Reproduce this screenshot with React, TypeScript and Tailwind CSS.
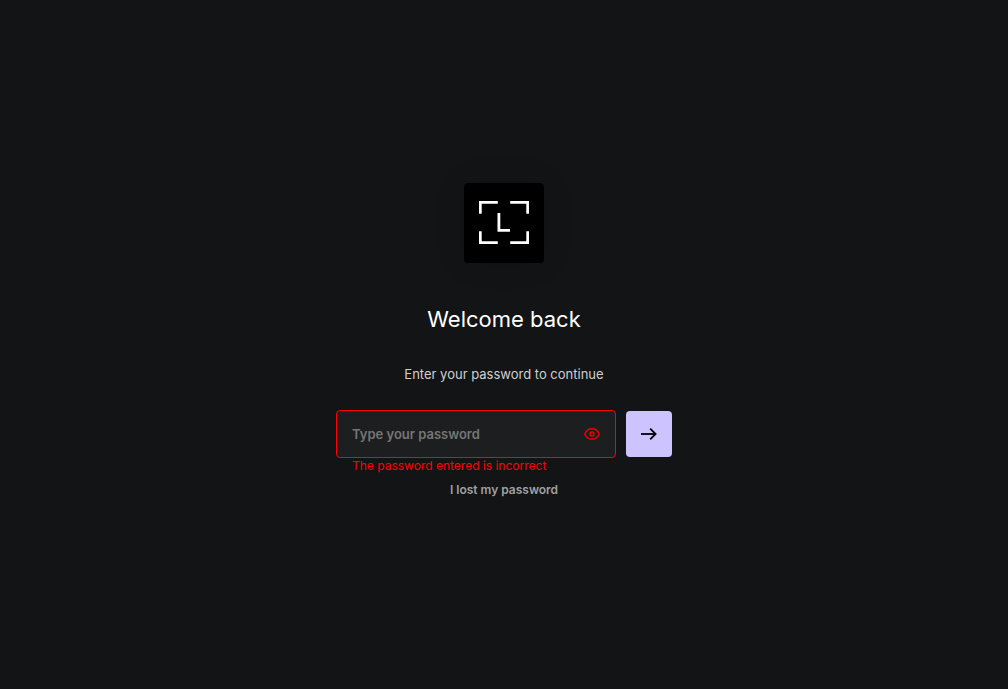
import { useState, type FormEvent } from "react";

function Logo() {
  return (
    <div className="flex size-20 items-center justify-center rounded bg-black shadow-[0_0_30px_rgba(0,0,0,0.12)]">
      <svg width="50" height="43" viewBox="0 0 50 43" fill="#fff" aria-hidden="true">
        <path d="M0 0H18.8V2.7H2.7V12.8H0Z" />
        <path d="M31.2 0H50V12.8H47.3V2.7H31.2Z" />
        <path d="M0 30.2H2.7V40.3H18.8V43H0Z" />
        <path d="M47.3 30.2H50V43H31.2V40.3H47.3Z" />
        <path d="M18.5 12H21.3V28H31V30.7H18.5Z" />
      </svg>
    </div>
  );
}

function EyeIcon() {
  return (
    <svg width="16" height="16" viewBox="0 0 16 16" fill="none" stroke="currentColor" strokeWidth="1.5" aria-hidden="true">
      <path d="M0.8 8C2.2 4.6 4.8 2.8 8 2.8S13.8 4.6 15.2 8C13.8 11.4 11.2 13.2 8 13.2S2.2 11.4 0.8 8Z" strokeLinejoin="round" />
      <circle cx="8" cy="8" r="2" />
    </svg>
  );
}

function ArrowIcon() {
  return (
    <svg width="16" height="16" viewBox="0 0 16 16" fill="none" stroke="currentColor" strokeWidth="1.8" aria-hidden="true">
      <path d="M0 8H14.6" />
      <path d="M9.2 2.6L14.6 8L9.2 13.4" />
    </svg>
  );
}

export default function App() {
  const [password, setPassword] = useState("");
  const [visible, setVisible] = useState(false);

  return (
    <main className="flex min-h-screen flex-col items-center justify-center bg-[#131416] px-4 pb-[9px] font-['Inter',sans-serif] text-white">
      <Logo />
      <h1 className="mt-10 text-[22px] leading-8">Welcome back</h1>
      <p className="mt-[29px] text-[13px] leading-5 text-[#d0d0d0]">Enter your password to continue</p>
      <form
        className="mt-[26px] flex w-full max-w-[336px] items-start gap-2.5"
        onSubmit={(event: FormEvent) => event.preventDefault()}
      >
        <div className="min-w-0 flex-1">
          <div className="flex h-12 items-center rounded border border-[#ff0000] bg-[#1d1e20] px-[15px]">
            <input
              type={visible ? "text" : "password"}
              value={password}
              onChange={(event) => setPassword(event.target.value)}
              placeholder="Type your password"
              aria-label="Password"
              aria-invalid="true"
              aria-describedby="password-error"
              className="min-w-0 flex-1 bg-transparent pt-0.5 text-[13px] font-semibold outline-none placeholder:text-[#767676]"
            />
            <button
              type="button"
              aria-label="Show password"
              onClick={() => setVisible(!visible)}
              className="text-[#f00000]"
            >
              <EyeIcon />
            </button>
          </div>
          <p id="password-error" className="px-4 text-xs leading-4 text-[#ff0000]">
            The password entered is incorrect
          </p>
        </div>
        <button
          type="submit"
          aria-label="Continue"
          className="mt-px flex size-[46px] items-center justify-center rounded bg-[#cdc3ff] text-black"
        >
          <ArrowIcon />
        </button>
      </form>
      <button type="button" className="mt-2 text-xs leading-4 font-semibold text-[#a0a0a0]">
        I lost my password
      </button>
    </main>
  );
}
